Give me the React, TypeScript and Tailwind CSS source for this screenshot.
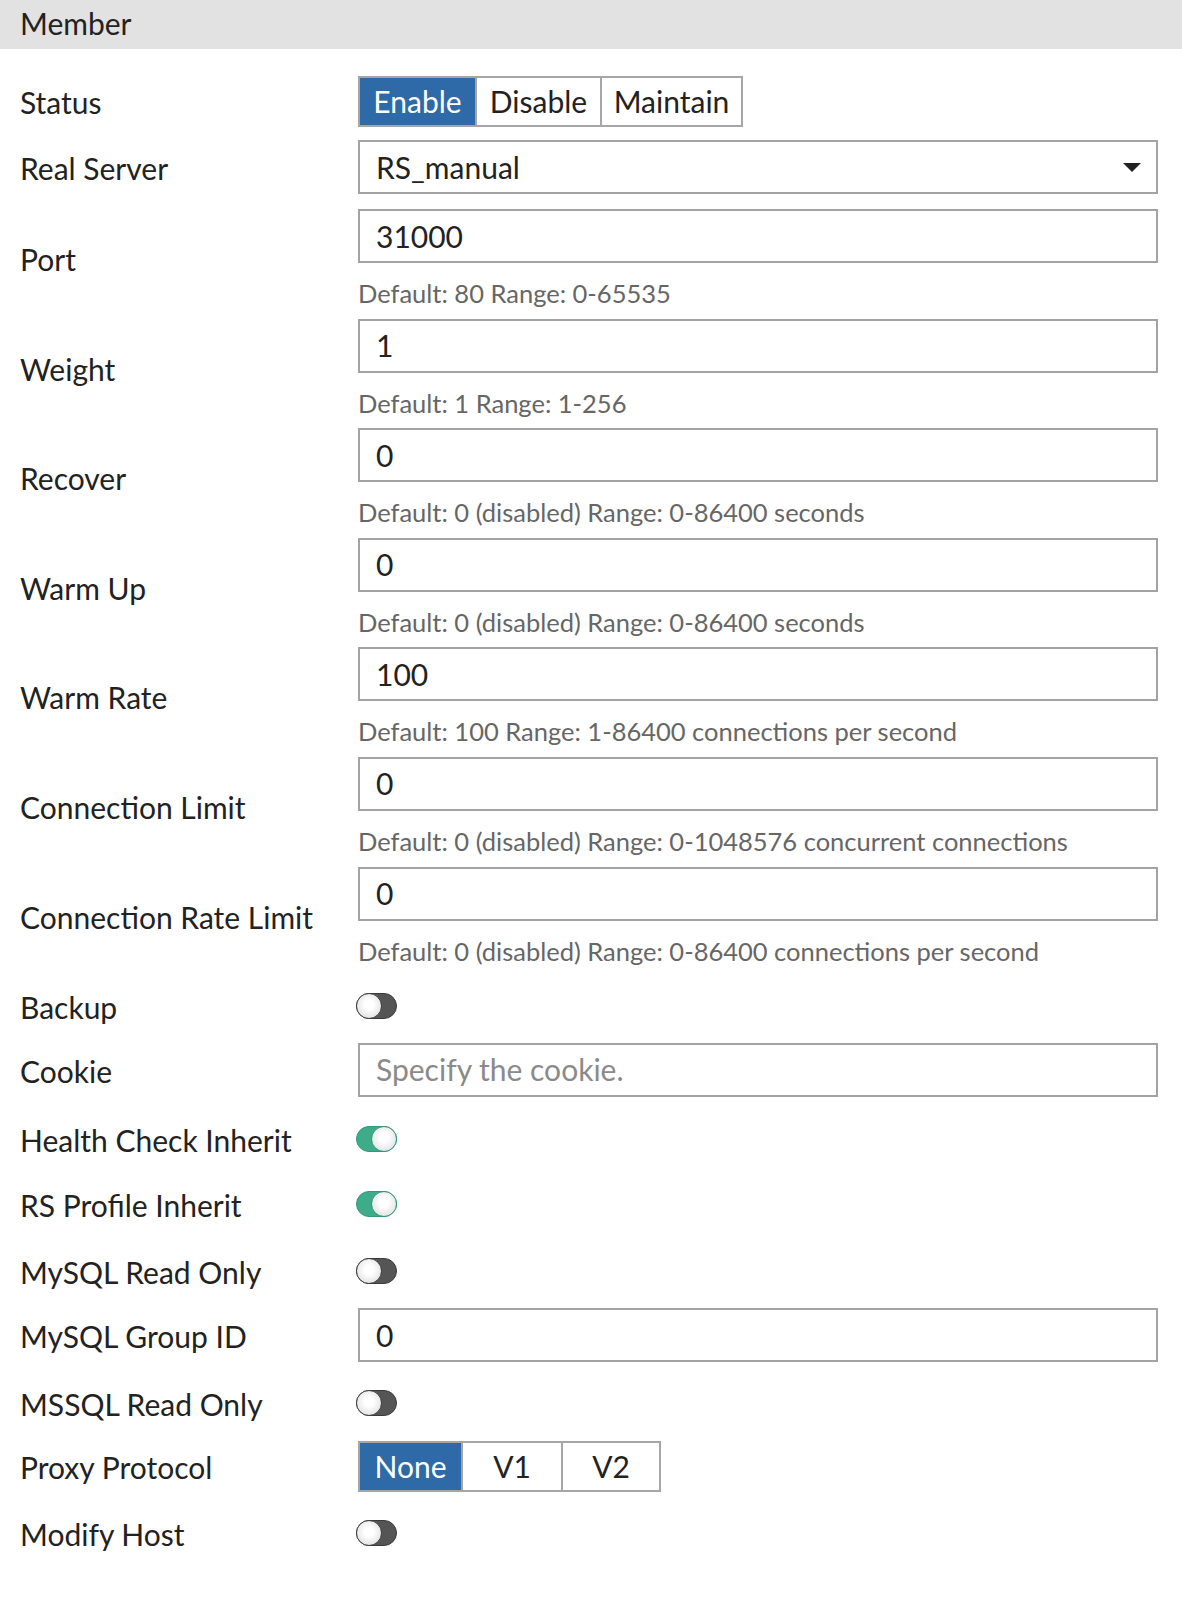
import { ReactNode } from "react";

type Seg = { label: string; width: string; active?: boolean };

function Segmented({ items }: { items: Seg[] }) {
  return (
    <div className="flex h-[51px] border-2 border-[#a6a6a6] bg-white">
      {items.map((it, i) => (
        <div
          key={it.label}
          className={[
            "flex items-center justify-center text-[30px]",
            it.width,
            i > 0 ? "border-l-2 border-[#a6a6a6]" : "",
            it.active ? "bg-[#2e69a8] text-white" : "text-[#222]",
          ].join(" ")}
        >
          {it.label}
        </div>
      ))}
    </div>
  );
}

function Toggle({ on }: { on?: boolean }) {
  return (
    <div
      className={[
        "relative -ml-[2px] h-[26px] w-[41px] rounded-full border",
        on ? "border-[#2f9a77] bg-[#3eac88]" : "border-[#3a3a3a] bg-[#555555]",
      ].join(" ")}
    >
      <div
        className={[
          "absolute top-[-1px] h-[26px] w-[26px] rounded-full border bg-[radial-gradient(circle_at_50%_45%,#ffffff_25%,#e4e4e4_75%,#d0d0d0_100%)]",
          on ? "right-[-1px] border-[#2f9a77]" : "left-[-1px] border-[#444]",
        ].join(" ")}
      />
    </div>
  );
}

function TextInput({ value, placeholder }: { value?: string; placeholder?: string }) {
  return (
    <div className="flex h-[54px] items-center border-2 border-[#a3a3a3] bg-white px-[16px] text-[30px]">
      {value ? (
        <span className="text-[#222]">{value}</span>
      ) : (
        <span className="text-[#8a8a8a]">{placeholder}</span>
      )}
    </div>
  );
}

function Row({
  label,
  mt,
  children,
}: {
  label: string;
  mt: string;
  children: ReactNode;
}) {
  return (
    <div className={["flex items-center", mt].join(" ")}>
      <div className="w-[358px] shrink-0 pl-[20px] pt-[3px] text-[30px] text-[#222]">
        {label}
      </div>
      <div className="flex-1 pr-[24.5px]">{children}</div>
    </div>
  );
}

function Simple({ children }: { children: ReactNode }) {
  return <div className="flex h-[54px] items-center">{children}</div>;
}

function WithHint({ value, hint }: { value: string; hint: string }) {
  return (
    <div className="flex flex-col">
      <TextInput value={value} />
      <span className="mt-[16px] text-[25.5px] leading-[28px] text-[#666]">
        {hint}
      </span>
    </div>
  );
}

export default function App() {
  return (
    <div className="min-h-[1602px] w-[1182px] bg-white font-['Lato',sans-serif] text-[#222]">
      <div className="flex h-[49px] items-center bg-[#e2e2e2] pb-[3px] pl-[20px] text-[30px]">
        Member
      </div>

      <Row label="Status" mt="mt-[25px]">
        <Simple>
          <Segmented
            items={[
              { label: "Enable", width: "w-[115px]", active: true },
              { label: "Disable", width: "w-[125px]" },
              { label: "Maintain", width: "w-[141px]" },
            ]}
          />
        </Simple>
      </Row>

      <Row label="Real Server" mt="mt-[12px]">
        <div className="flex h-[54px] items-center justify-between border-2 border-[#a3a3a3] bg-white pl-[16px] pr-[14px] text-[30px]">
          <span>RS_manual</span>
          <svg width="20" height="11" viewBox="0 0 20 11">
            <path d="M1 1 L19 1 L10 10 Z" fill="#222" />
          </svg>
        </div>
      </Row>

      <Row label="Port" mt="mt-[15px]">
        <WithHint value="31000" hint="Default: 80 Range: 0-65535" />
      </Row>
      <Row label="Weight" mt="mt-[11.6px]">
        <WithHint value="1" hint="Default: 1 Range: 1-256" />
      </Row>
      <Row label="Recover" mt="mt-[11.6px]">
        <WithHint value="0" hint="Default: 0 (disabled) Range: 0-86400 seconds" />
      </Row>
      <Row label="Warm Up" mt="mt-[11.6px]">
        <WithHint value="0" hint="Default: 0 (disabled) Range: 0-86400 seconds" />
      </Row>
      <Row label="Warm Rate" mt="mt-[11.6px]">
        <WithHint
          value="100"
          hint="Default: 100 Range: 1-86400 connections per second"
        />
      </Row>
      <Row label="Connection Limit" mt="mt-[11.6px]">
        <WithHint
          value="0"
          hint="Default: 0 (disabled) Range: 0-1048576 concurrent connections"
        />
      </Row>
      <Row label="Connection Rate Limit" mt="mt-[11.6px]">
        <WithHint
          value="0"
          hint="Default: 0 (disabled) Range: 0-86400 connections per second"
        />
      </Row>

      <Row label="Backup" mt="mt-[14px]">
        <Simple>
          <Toggle />
        </Simple>
      </Row>
      <Row label="Cookie" mt="mt-[10px]">
        <TextInput placeholder="Specify the cookie." />
      </Row>
      <Row label="Health Check Inherit" mt="mt-[15px]">
        <Simple>
          <Toggle on />
        </Simple>
      </Row>
      <Row label="RS Profile Inherit" mt="mt-[11.7px]">
        <Simple>
          <Toggle on />
        </Simple>
      </Row>
      <Row label="MySQL Read Only" mt="mt-[12.3px]">
        <Simple>
          <Toggle />
        </Simple>
      </Row>
      <Row label="MySQL Group ID" mt="mt-[10.6px]">
        <TextInput value="0" />
      </Row>
      <Row label="MSSQL Read Only" mt="mt-[14px]">
        <Simple>
          <Toggle />
        </Simple>
      </Row>
      <Row label="Proxy Protocol" mt="mt-[9.3px]">
        <Simple>
          <Segmented
            items={[
              { label: "None", width: "w-[101px]", active: true },
              { label: "V1", width: "w-[100px]" },
              { label: "V2", width: "w-[98px]" },
            ]}
          />
        </Simple>
      </Row>
      <Row label="Modify Host" mt="mt-[13px]">
        <Simple>
          <Toggle />
        </Simple>
      </Row>
    </div>
  );
}
